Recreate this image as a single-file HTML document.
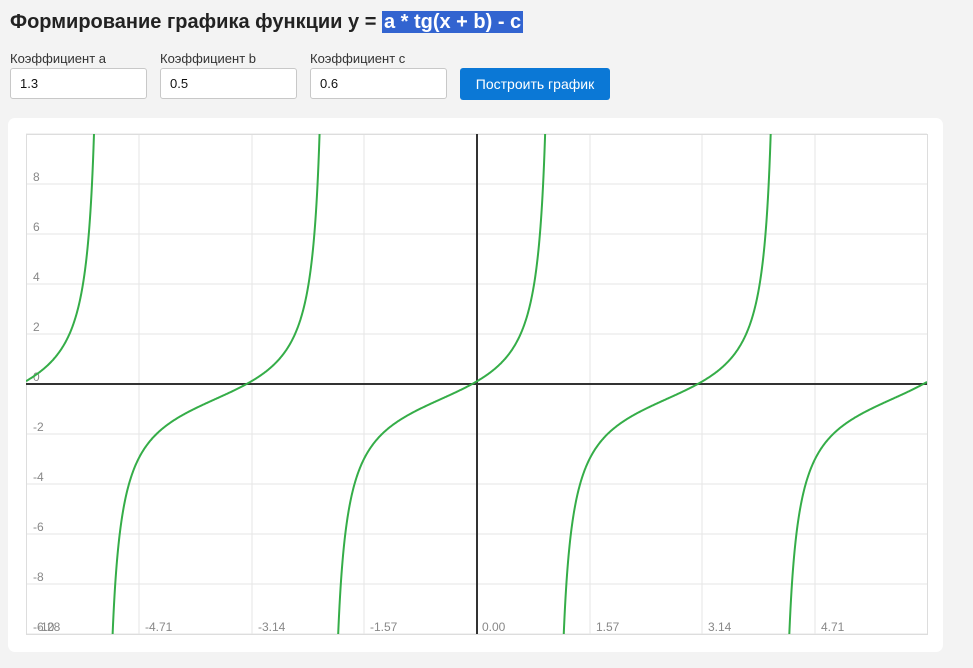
<!DOCTYPE html>
<html style="overflow:hidden;width:973px;height:668px"><head><meta charset="utf-8">
<style>
html,body{margin:0;padding:0}
body{background:#f3f3f3;font-family:"Liberation Sans",sans-serif;width:973px;height:668px;overflow:hidden;position:relative}
h1{position:absolute;left:10px;top:9px;margin:0;font-size:20px;font-weight:bold;color:#222;white-space:nowrap;line-height:27px}
h1 span{background:#3264d0;color:#fff;padding:0 2px}
.lbl{position:absolute;top:51px;font-size:13px;color:#333}
.inp{position:absolute;top:68px;width:137px;height:31px;border:1px solid #c8c8c8;border-radius:3px;background:#fff;box-sizing:border-box;font-size:13px;line-height:30px;padding-left:9px;color:#111}
.btn{position:absolute;left:460px;top:68px;width:150px;height:32px;background:#0b78d6;border-radius:3px;color:#fff;font-size:14px;line-height:32px;text-align:center}
.card{position:absolute;left:8px;top:118px;width:935px;height:534px;background:#fff;border-radius:7px}
svg{position:absolute;left:0;top:0;display:block}
</style></head><body>
<h1>Формирование графика функции y = <span>a * tg(x + b) - c</span></h1>
<div class="lbl" style="left:10px">Коэффициент a</div>
<div class="lbl" style="left:160px">Коэффициент b</div>
<div class="lbl" style="left:310px">Коэффициент c</div>
<div class="inp" style="left:10px">1.3</div>
<div class="inp" style="left:160px">0.5</div>
<div class="inp" style="left:310px">0.6</div>
<div class="btn">Построить график</div>
<div class="card"></div>
<svg id="s" width="973" height="668" font-family="Liberation Sans, sans-serif" font-size="12" fill="#888">
<defs><clipPath id="c"><rect x="26" y="134" width="901" height="500"/></clipPath></defs>
<g id="grid" stroke="#e6e6e6" stroke-width="1"></g>
<rect x="26.5" y="134.5" width="901" height="500" fill="none" stroke="#ddd"/>
<line x1="26" y1="384" x2="927" y2="384" stroke="#333" stroke-width="2"/>
<line x1="477" y1="134" x2="477" y2="634" stroke="#333" stroke-width="2"/>
<g id="lab"></g>
<path id="p" fill="none" stroke="#35ad48" stroke-width="2" clip-path="url(#c)"/>
</svg>
<script>
var g=document.getElementById('grid'),lab=document.getElementById('lab'),h='',l='';
for(var i=0;i<=10;i++){var y=134+i*50;h+='<line x1="26" y1="'+y+'" x2="927" y2="'+y+'"/>';var v=10-2*i;if(i>0&&i<10&&v!=0)l+='<text x="33" y="'+(y-3)+'">'+v+'</text>';}
l+='<text x="33" y="381">0</text>';
var xs=[[-4.71,139],[-3.14,252],[-1.57,364],[1.57,590],[3.14,702],[4.71,815]];
xs.forEach(function(a){h+='<line x1="'+a[1]+'" y1="134" x2="'+a[1]+'" y2="634"/>';l+='<text x="'+(a[1]+6)+'" y="631">'+a[0].toFixed(2)+'</text>';});
l+='<text x="482" y="631">0.00</text><text x="33" y="631">-6.28</text><text x="37" y="631">-10</text>';
g.innerHTML=h;lab.innerHTML=l;
var d='',prev=null,sx=71.8;
for(var px=26;px<=927;px+=0.5){var x=(px-477)/sx;var y=1.3*Math.tan(x+0.5)-0.6;var py=384-y*25;
if(py>2000)py=2000;if(py<-1200)py=-1200;
if(prev===null||Math.abs(py-prev)>1500)d+='M'+px+' '+py.toFixed(1);else d+='L'+px+' '+py.toFixed(1);prev=py;}
document.getElementById('p').setAttribute('d',d);
</script>
</body></html>
